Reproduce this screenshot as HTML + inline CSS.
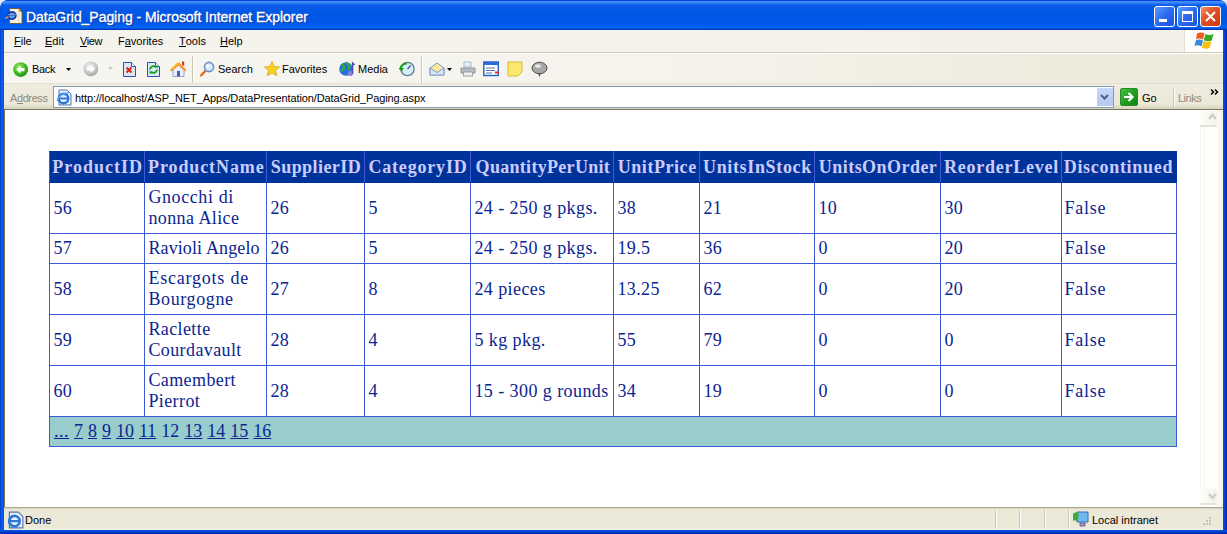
<!DOCTYPE html>
<html><head><meta charset="utf-8">
<style>
*{box-sizing:border-box}
html,body{margin:0;padding:0;width:1227px;height:534px;overflow:hidden;background:#fff}
body{position:relative;font-family:"Liberation Sans",sans-serif;font-size:11px;color:#000}
.a{position:absolute}
svg{position:absolute;overflow:visible}
#title{left:0;top:0;width:1227px;height:30px;border-radius:7px 7px 0 0;
 background:linear-gradient(#0a3fd8 0px,#0a3fd8 1px,#3d8ef8 1px,#3a8af6 3px,#1668ee 4px,#0a5ce8 6px,#0058e6 12px,#0056e4 22px,#005ef0 25px,#0a64f4 28px,#0040c8 29px,#0030b0 30px)}
#title .t{left:26px;top:9px;color:#fff;font-weight:normal;font-size:14px;line-height:17px;-webkit-text-stroke:0.35px #fff;text-shadow:1px 1px 0 #0a2890;white-space:nowrap;letter-spacing:-0.05px}
.cap{top:6px;width:21px;height:21px;border:1px solid #fff;border-radius:3px;background:linear-gradient(135deg,#5a9cff,#2a6af0 50%,#1a55e0)}
#lb{left:0;top:30px;width:4px;height:504px;background:linear-gradient(90deg,#0030c8 0,#0a5ce6 1px,#0058e6 4px)}
#rb{left:1223px;top:30px;width:4px;height:504px;background:linear-gradient(90deg,#0058e6,#0040d0 2px,#0020a0)}
#bb{left:0;top:530px;width:1227px;height:4px;background:linear-gradient(#0058e6,#0040d0 2px,#0020a0)}
#menu{left:4px;top:30px;width:1219px;height:23px;background:linear-gradient(90deg,#f5f3ed 0,#f5f2ec 50%,#f4efe8 100%);border-bottom:1px solid #cdc9bc;box-shadow:0 1px 0 #fff}
#menu span{position:absolute;top:5px;line-height:13px;white-space:nowrap}
u{text-decoration:none;border-bottom:1px solid #000;display:inline-block;line-height:10px}
#tool{left:4px;top:54px;width:1219px;height:30px;background:linear-gradient(90deg,#f6f5f0 0,#f5f3ec 55%,#f0ede0 80%,#ece9da 100%);border-bottom:1px solid #e4dfd2}
#tool span{position:absolute;top:9px;line-height:13px;white-space:nowrap}
#addr{left:4px;top:84px;width:1219px;height:26px;background:linear-gradient(#efece0,#ece9d8 80%,#d8d3bf);border-bottom:1px solid #7b7560}
#content{left:4px;top:110px;width:1219px;height:397px;background:#fff}
#status{left:4px;top:507px;width:1219px;height:23px;background:linear-gradient(#a9a591 0,#a9a591 1px,#d8d4c2 1px,#ece9d8 3px,#ece9d8 21px,#f4f2e8 22px)}
.sep{width:1px;background:#cbc6b0;box-shadow:1px 0 0 #fff}
table.dg{position:absolute;left:49px;top:151px;border-collapse:collapse;font-family:"Liberation Serif",serif;font-size:18px;color:#0a2590;table-layout:fixed}
table.dg td{border:1px solid #3f5ad8;padding:0 0 0 3.4px;word-spacing:0.1px;letter-spacing:0.4px;vertical-align:middle;line-height:21px;white-space:nowrap;overflow:hidden}
table.dg tr.h td{background:#003399;color:#ccccff;font-weight:bold;border-bottom-color:#003399;border-top-color:#003399;letter-spacing:0.4px}
table.dg tr.p td{background:#99cccc}
table.dg a{color:#0a2590}
table.dg td.f{padding-left:2.4px;letter-spacing:0.8px}
</style></head><body>
<div id="title" class="a">
 <svg style="left:4px;top:4px" width="22" height="24" viewBox="0 0 22 24">
  <path d="M5.5 4.5h10l2.5 2.5v12.5H5.5z" fill="#f8f4e0" stroke="#6a6440" stroke-width="1"/>
  <path d="M15.5 4.5v2.5h2.5" fill="none" stroke="#403c20" stroke-width="1.2"/>
  <path d="M14.5 5v14" stroke="#e8e4c8" stroke-width="2"/>
  <ellipse cx="8" cy="11.5" rx="3.8" ry="3.6" fill="#58a8f0" stroke="#1830a0" stroke-width="1.8"/>
  <path d="M4.5 11h7" stroke="#1830a0" stroke-width="1.6"/>
  <path d="M4.2 10.8h7.5" stroke="#a8e8f8" stroke-width="0.8"/>
  <path d="M1.5 14.5c1-1 2-1.5 3-1.5" stroke="#f0a040" stroke-width="1.4" fill="none"/>
 </svg>
 <span class="t a">DataGrid_Paging - Microsoft Internet Explorer</span>
 <div class="a cap" style="left:1154px"><div class="a" style="left:4px;top:12px;width:8px;height:3px;background:#fff"></div></div>
 <div class="a cap" style="left:1177px"><div class="a" style="left:4px;top:4px;width:11px;height:11px;border:1px solid #fff;border-top-width:3px"></div></div>
 <div class="a cap" style="left:1200px;background:linear-gradient(135deg,#f0906a,#e04e22 45%,#c83c10)">
  <svg style="left:4px;top:4px" width="11" height="11" viewBox="0 0 11 11"><path d="M1 1L10 10M10 1L1 10" stroke="#fff" stroke-width="2"/></svg>
 </div>
 <div class="a" style="left:1222px;top:0;width:5px;height:5px;background:radial-gradient(circle at 0 5px,transparent 4px,#e8e8f0 5px)"></div>
 <div class="a" style="left:0;top:0;width:5px;height:5px;background:radial-gradient(circle at 5px 5px,transparent 4px,#e8e8f0 5px)"></div>
</div>
<div id="lb" class="a"></div><div id="rb" class="a"></div><div id="bb" class="a"></div>
<div id="menu" class="a">
 <span style="left:10px"><u>F</u>ile</span><span style="left:41px"><u>E</u>dit</span><span style="left:76px;letter-spacing:-0.5px"><u>V</u>iew</span><span style="left:114px">F<u>a</u>vorites</span><span style="left:175px"><u>T</u>ools</span><span style="left:216px"><u>H</u>elp</span>
 <div class="a" style="left:1180px;top:0;width:39px;height:22px;background:#fdfdfb;border-left:1px solid #e4e0d0"></div>
 <svg style="left:1191px;top:1px" width="20" height="18" viewBox="0 0 20 18">
  <path d="M2 2.5c2-1.2 4.5-1.5 7.5 0L8 8.5C5.5 7 3.5 7.2 1 8z" fill="#f05a1a"/>
  <path d="M10.5 3c2.5 1.3 5 1.3 8 0l-1.8 6.5c-2.6 1.2-5 1-8-0.3z" fill="#38a820"/>
  <path d="M1 9c2.5-0.8 4.5-1 7 0.5L6.5 15.5C4 14 2 14 -0.5 15z" fill="#3a8ae0"/>
  <path d="M8.5 10c3 1.3 5.4 1.5 8 0.3l-1.7 6.5c-2.6 1.2-5 1.2-8-0.3z" fill="#f8c010"/>
 </svg>
</div>
<div id="tool" class="a">
 <svg style="left:9px;top:8px" width="16" height="16" viewBox="0 0 16 16">
  <defs><radialGradient id="gb" cx="0.4" cy="0.35" r="0.7"><stop offset="0" stop-color="#a8f070"/><stop offset="0.6" stop-color="#3cb820"/><stop offset="1" stop-color="#178a10"/></radialGradient>
  <radialGradient id="gg" cx="0.4" cy="0.35" r="0.7"><stop offset="0" stop-color="#f4f4f4"/><stop offset="0.6" stop-color="#c8c8c8"/><stop offset="1" stop-color="#a0a0a0"/></radialGradient></defs>
  <circle cx="7.6" cy="7.6" r="7.4" fill="url(#gb)"/>
  <path d="M3.3 7.6L7.5 3.6V6H11.5V9.2H7.5V11.6z" fill="#fff"/>
 </svg>
 <span style="left:28px;letter-spacing:-0.3px">Back</span>
 <svg style="left:62px;top:14px" width="5" height="3"><path d="M0 0h5L2.5 3z" fill="#000"/></svg>
 <svg style="left:79px;top:7px" width="16" height="16" viewBox="0 0 16 16">
  <circle cx="7.8" cy="7.8" r="7.4" fill="url(#gg)"/>
  <path d="M12.2 7.8L8 3.8V6.2H4V9.4H8V11.8z" fill="#fff"/>
 </svg>
 <svg style="left:104px;top:13px" width="5" height="3"><path d="M0 0h5L2.5 3z" fill="#c8c8c8"/></svg>
 <svg style="left:118px;top:7px" width="15" height="17" viewBox="0 0 15 17">
  <path d="M1.5 1.5h8l4 4v10h-12z" fill="#dce8f8" stroke="#3050b0" stroke-width="1"/>
  <path d="M9.5 1.5v4h4" fill="#fff" stroke="#3050b0" stroke-width="1"/>
  <path d="M4.5 6.5l5 5M9.5 6.5l-5 5" stroke="#e82010" stroke-width="2"/>
 </svg>
 <svg style="left:142px;top:7px" width="15" height="17" viewBox="0 0 15 17">
  <path d="M1.5 1.5h8l4 4v10h-12z" fill="#dce8f8" stroke="#3050b0" stroke-width="1"/>
  <path d="M9.5 1.5v4h4" fill="#fff" stroke="#3050b0" stroke-width="1"/>
  <path d="M4 8.5a3.5 3.5 0 0 1 6-2.2M11 8.5a3.5 3.5 0 0 1-6 2.2" fill="none" stroke="#10a020" stroke-width="1.8"/>
  <path d="M8.5 4.5h3v3zM6.5 12.5h-3v-3z" fill="#10a020"/>
 </svg>
 <svg style="left:165px;top:6px" width="18" height="18" viewBox="0 0 18 18">
  <path d="M4 9v7.5h11V9L9.5 4z" fill="#e8f0ff" stroke="#8090c0" stroke-width="0.8"/>
  <path d="M8 11h3v5.5H8z" fill="#4060b0"/>
  <path d="M1 10L9.5 2 17.5 10 16 11.5 9.5 5.5 2.5 11.5z" fill="#f89828"/>
  <path d="M2 9L9.5 2.2" stroke="#ffd040" stroke-width="1.2"/>
  <rect x="13" y="1.5" width="2.2" height="4" fill="#e03020"/>
 </svg>
 <div class="a sep" style="left:188px;top:2px;height:27px"></div>
 <svg style="left:195px;top:7px" width="16" height="16" viewBox="0 0 16 16">
  <path d="M2 14.5L6.2 10.2" stroke="#e07020" stroke-width="2.4" stroke-linecap="round"/>
  <circle cx="10" cy="6" r="4.6" fill="#d4ecfc" stroke="#7090c8" stroke-width="1.6"/>
  <circle cx="9" cy="5" r="1.5" fill="#fff"/>
 </svg>
 <span style="left:214px">Search</span>
 <svg style="left:260px;top:7px" width="16" height="16" viewBox="0 0 16 16">
  <path d="M8 0.5l2.2 5 5.3 0.4-4 3.5 1.3 5.3L8 11.9 3.2 14.7 4.5 9.4 0.5 5.9l5.3-0.4z" fill="#f8d420" stroke="#d8a010" stroke-width="0.8"/>
 </svg>
 <span style="left:278px">Favorites</span>
 <svg style="left:335px;top:7px" width="16" height="16" viewBox="0 0 16 16">
  <circle cx="7" cy="8" r="6.8" fill="#2a70d8"/>
  <path d="M2.5 4c2 0 3 1 2.5 3s-2 1.5-3 3.5M7 1.5c1 1.5 3 1 3.5 3 0.5 2-1 2.5-0.5 4.5" fill="none" stroke="#30b030" stroke-width="2.2"/>
  <circle cx="11.5" cy="12.5" r="2.6" fill="#9080e0"/>
  <path d="M13.6 12.5V2l2 2" fill="none" stroke="#5048b0" stroke-width="1.4"/>
 </svg>
 <span style="left:354px">Media</span>
 <svg style="left:395px;top:7px" width="16" height="16" viewBox="0 0 16 16">
  <circle cx="8.5" cy="8" r="6.6" fill="#d8eef8" stroke="#607890" stroke-width="1.3"/>
  <path d="M8.5 8L11.5 4.5" stroke="#3050a0" stroke-width="1.2"/>
  <path d="M1 8.5c1-4 4-6 7-6" fill="none" stroke="#20a020" stroke-width="2.2"/>
  <path d="M0 7l2.5 4 2.5-4z" fill="#20a020"/>
 </svg>
 <div class="a sep" style="left:417px;top:2px;height:27px"></div>
 <svg style="left:425px;top:7px" width="16" height="16" viewBox="0 0 16 16">
  <path d="M1 7l7-5 7 5v7H1z" fill="#fce8a0" stroke="#8098c8" stroke-width="1"/>
  <path d="M1 7l7 4.5 7-4.5v7H1z" fill="#d8e6fa" stroke="#8098c8" stroke-width="1"/>
 </svg>
 <svg style="left:443px;top:14px" width="5" height="3"><path d="M0 0h5L2.5 3z" fill="#000"/></svg>
 <svg style="left:456px;top:7px" width="16" height="16" viewBox="0 0 16 16">
  <path d="M4 1h7v5H4z" fill="#e8f0fa" stroke="#98a8c0" stroke-width="0.8"/>
  <path d="M1 7h14v5H1z" fill="#b8bcc4" stroke="#808890" stroke-width="0.8"/>
  <path d="M3.5 11h9v4h-9z" fill="#f0f0f0" stroke="#909090" stroke-width="0.8"/>
 </svg>
 <svg style="left:479px;top:7px" width="17" height="16" viewBox="0 0 17 16">
  <rect x="0.8" y="1" width="14.5" height="13.5" fill="#fff" stroke="#2060c8" stroke-width="1.4"/>
  <rect x="0.8" y="1" width="14.5" height="3" fill="#2a6ad8"/>
  <path d="M3 7h9M3 9.5h9M3 12h6" stroke="#6070a0" stroke-width="1"/>
  <path d="M12 10.5h4v2h-4z" fill="#e03030"/>
 </svg>
 <svg style="left:503px;top:7px" width="16" height="16" viewBox="0 0 16 16">
  <path d="M1 1h14v10l-4 4H1z" fill="#fce870" stroke="#d8b830" stroke-width="1"/>
 </svg>
 <svg style="left:527px;top:7px" width="17" height="16" viewBox="0 0 17 16">
  <ellipse cx="8.5" cy="7" rx="7.5" ry="5.8" fill="#a8a8a8" stroke="#505050" stroke-width="1"/>
  <path d="M7 12l1.5 4 1.5-4z" fill="#505050"/>
  <ellipse cx="7" cy="5" rx="3" ry="1.8" fill="#e8e8e8"/>
 </svg>
</div>
<div id="addr" class="a">
 <span class="a" style="left:6px;top:8px;line-height:13px;color:#8c8a80;letter-spacing:-0.4px">A<u style="border-color:#8c8a80">d</u>dress</span>
 <div class="a" style="left:49px;top:2px;width:1061px;height:22px;background:#fff;border:1px solid #7f9db9"></div>
 <svg style="left:52px;top:5px" width="17" height="17" viewBox="0 0 17 17">
  <path d="M3 1h8l4 4v11H3z" fill="#eef2fc" stroke="#5070b0" stroke-width="1"/>
  <circle cx="7.5" cy="9.5" r="4.8" fill="none" stroke="#2a78d8" stroke-width="2.4"/>
  <path d="M3 9.5h9" stroke="#2a78d8" stroke-width="2"/>
  <path d="M1 12c2-6 8-9 12-8" fill="none" stroke="#60a8f0" stroke-width="1.3"/>
 </svg>
 <span class="a" style="left:71px;top:8px;line-height:13px;letter-spacing:-0.1px">http://localhost/ASP_NET_Apps/DataPresentation/DataGrid_Paging.aspx</span>
 <div class="a" style="left:1093px;top:4px;width:16px;height:18px;background:linear-gradient(#c8d8fa,#b4c8f4);border-radius:1px"></div>
 <svg style="left:1096px;top:10px" width="9" height="6" viewBox="0 0 9 6"><path d="M1 1l3.5 3.5L8 1" fill="none" stroke="#4d6185" stroke-width="2"/></svg>
 <div class="a" style="left:1116px;top:4px;width:18px;height:18px;border-radius:2px;background:linear-gradient(135deg,#48c048,#20a020 50%,#108010);border:1px solid #2a8a2a"></div>
 <svg style="left:1119px;top:7px" width="12" height="12" viewBox="0 0 12 12"><path d="M1 6h8M5.5 2L9.5 6 5.5 10" fill="none" stroke="#fff" stroke-width="2.2"/></svg>
 <span class="a" style="left:1138px;top:8px;line-height:13px">Go</span>
 <div class="a sep" style="left:1169px;top:3px;height:20px"></div>
 <span class="a" style="left:1174px;top:8px;line-height:13px;color:#8c8a80;letter-spacing:-0.5px">Links</span>
 <svg style="left:1206px;top:5px" width="10" height="6" viewBox="0 0 10 6"><path d="M1 0.5l2.5 2.5L1 5.5M5 0.5l2.5 2.5L5 5.5" fill="none" stroke="#000" stroke-width="1.5"/></svg>
</div>
<div id="content" class="a">
 <div class="a" style="left:0;top:0;width:1px;height:397px;background:#7b7560"></div>
 <div class="a" style="left:1196px;top:0;width:17px;height:397px;background:#fefefc;border-left:1px solid #f4f3ee"></div>
 <div class="a" style="left:1200px;top:0;width:1px;height:397px;background:#f2f1ea"></div>
 <div class="a" style="left:1196px;top:1px;width:17px;height:16px;background:linear-gradient(90deg,#fdfdfa,#f3f2ea);border-bottom:2px solid #e6e4da"></div>
 <svg style="left:1204px;top:3px" width="9" height="7" viewBox="0 0 9 7"><path d="M1 6l3.5-4L8 6" fill="none" stroke="#cfcdc2" stroke-width="2.2"/></svg>
 <div class="a" style="left:1196px;top:379px;width:17px;height:16px;background:linear-gradient(90deg,#fdfdfa,#f3f2ea);border-bottom:2px solid #e6e4da"></div>
 <svg style="left:1204px;top:383px" width="9" height="7" viewBox="0 0 9 7"><path d="M1 1l3.5 4L8 1" fill="none" stroke="#cfcdc2" stroke-width="2.2"/></svg>
 <div class="a" style="left:1213px;top:0;width:6px;height:397px;background:linear-gradient(90deg,#fbfaf4,#f4f2e6)"></div>
</div>
<div id="status" class="a">
 <svg style="left:2px;top:4px" width="18" height="18" viewBox="0 0 16 16">
  <path d="M3 1h8l4 4v10H3z" fill="#eef2fc" stroke="#5070b0" stroke-width="1"/>
  <circle cx="7.5" cy="9" r="4.6" fill="none" stroke="#2a78d8" stroke-width="2.4"/>
  <path d="M3 9h9" stroke="#2a78d8" stroke-width="2"/>
 </svg>
 <span class="a" style="left:21px;top:7px;line-height:13px">Done</span>
 <div class="a sep" style="left:991px;top:3px;height:18px"></div>
 <div class="a sep" style="left:1015px;top:3px;height:18px"></div>
 <div class="a sep" style="left:1040px;top:3px;height:18px"></div>
 <div class="a sep" style="left:1064px;top:3px;height:18px"></div>
 <svg style="left:1068px;top:4px" width="17" height="17" viewBox="0 0 17 17">
  <path d="M5 1h11v10H5z" fill="#70b8f0" stroke="#3070b0" stroke-width="1"/>
  <path d="M1 3c2-2 5-2 6 1l-2 6c-2-1-3-1-4 0z" fill="#40a840"/>
  <path d="M8 12h5v3H8z" fill="#a0a0c0" stroke="#505080" stroke-width="0.8"/>
 </svg>
 <span class="a" style="left:1088px;top:7px;line-height:13px">Local intranet</span>
 <svg style="left:1196px;top:10px" width="12" height="12" viewBox="0 0 12 12">
  <g fill="#c8c4b0"><rect x="9" y="0" width="2" height="2"/><rect x="6" y="3" width="2" height="2"/><rect x="9" y="3" width="2" height="2"/><rect x="3" y="6" width="2" height="2"/><rect x="6" y="6" width="2" height="2"/><rect x="9" y="6" width="2" height="2"/></g>
 </svg>
</div>
<table class="dg">
<colgroup><col style="width:95px"><col style="width:122px"><col style="width:98px"><col style="width:106px"><col style="width:143px"><col style="width:86px"><col style="width:115px"><col style="width:126px"><col style="width:121px"><col style="width:115px"></colgroup>
<tr class="h" style="height:31px"><td style="letter-spacing:1.00px;padding-left:2.3px">ProductID</td><td style="letter-spacing:0.89px;padding-left:3.1px">ProductName</td><td style="letter-spacing:0.43px;padding-left:3.8px">SupplierID</td><td style="letter-spacing:0.82px;padding-left:3.4px">CategoryID</td><td style="letter-spacing:0.30px;padding-left:4.6px">QuantityPerUnit</td><td style="letter-spacing:0.56px;padding-left:3.7px">UnitPrice</td><td style="letter-spacing:0.65px;padding-left:3.0px">UnitsInStock</td><td style="letter-spacing:0.46px;padding-left:3.8px">UnitsOnOrder</td><td style="letter-spacing:0.76px;padding-left:2.9px">ReorderLevel</td><td style="letter-spacing:0.7px;padding-left:1.7px;border-right-color:#003399">Discontinued</td></tr>
<tr style="height:51px"><td>56</td><td><span style="letter-spacing:0.6px">Gnocchi di</span><br>nonna Alice</td><td>26</td><td>5</td><td>24 - 250 g pkgs.</td><td>38</td><td>21</td><td>10</td><td>30</td><td class="f">False</td></tr>
<tr style="height:30px"><td>57</td><td style="letter-spacing:0.12px">Ravioli Angelo</td><td>26</td><td>5</td><td>24 - 250 g pkgs.</td><td>19.5</td><td>36</td><td>0</td><td>20</td><td class="f">False</td></tr>
<tr style="height:51px"><td>58</td><td><span style="letter-spacing:0.78px">Escargots de</span><br><span style="letter-spacing:0.62px">Bourgogne</span></td><td>27</td><td>8</td><td>24 pieces</td><td>13.25</td><td>62</td><td>0</td><td>20</td><td class="f">False</td></tr>
<tr style="height:51px"><td>59</td><td>Raclette<br>Courdavault</td><td>28</td><td>4</td><td>5 kg pkg.</td><td>55</td><td>79</td><td>0</td><td>0</td><td class="f">False</td></tr>
<tr style="height:51px"><td>60</td><td>Camembert<br>Pierrot</td><td>28</td><td>4</td><td>15 - 300 g rounds</td><td>34</td><td>19</td><td>0</td><td>0</td><td class="f">False</td></tr>
<tr class="p" style="height:30px"><td colspan="10" style="word-spacing:0.5px;letter-spacing:0;padding-left:4px"><a href="#" style="letter-spacing:0.5px">...</a> <a href="#">7</a> <a href="#">8</a> <a href="#">9</a> <a href="#">10</a> <a href="#">11</a> 12 <a href="#">13</a> <a href="#">14</a> <a href="#">15</a> <a href="#">16</a></td></tr>
</table>
</body></html>
